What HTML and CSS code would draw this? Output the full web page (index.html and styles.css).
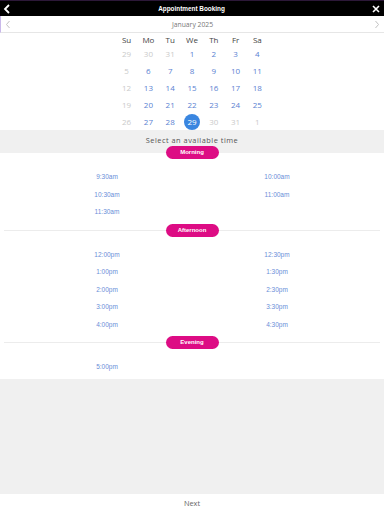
FILE: index.html
```html
<!DOCTYPE html>
<html>
<head>
    <title>Appointment Booking</title>
    <link rel="stylesheet" href="styles.css">
</head>
<body>
<div class="app">
    <div class="topbar">
        <svg class="ico back" width="8" height="10" viewBox="0 0 8 10"><path d="M6 1 L2 5 L6 9" fill="none" stroke="#fff" stroke-width="1.8"/></svg>
        <span class="title">Appointment Booking</span>
        <svg class="ico close" width="8" height="8" viewBox="0 0 8 8"><path d="M1 1 L7 7 M7 1 L1 7" fill="none" stroke="#fff" stroke-width="1.6"/></svg>
    </div>

    <div class="monthbar">
        <svg width="6" height="9" viewBox="0 0 6 9"><path d="M4.5 1 L1.5 4.5 L4.5 8" fill="none" stroke="#bbb" stroke-width="0.9"/></svg>
        <span class="month">January 2025</span>
        <svg width="6" height="9" viewBox="0 0 6 9"><path d="M1.5 1 L4.5 4.5 L1.5 8" fill="none" stroke="#bbb" stroke-width="0.9"/></svg>
    </div>

    <div class="cal">
        <div class="wd">Su</div><div class="wd">Mo</div><div class="wd">Tu</div><div class="wd">We</div><div class="wd">Th</div><div class="wd">Fr</div><div class="wd">Sa</div>
        <div class="d off">29</div><div class="d off">30</div><div class="d off">31</div><div class="d">1</div><div class="d">2</div><div class="d">3</div><div class="d">4</div>
        <div class="d off">5</div><div class="d">6</div><div class="d">7</div><div class="d">8</div><div class="d">9</div><div class="d">10</div><div class="d">11</div>
        <div class="d off">12</div><div class="d">13</div><div class="d">14</div><div class="d">15</div><div class="d">16</div><div class="d">17</div><div class="d">18</div>
        <div class="d off">19</div><div class="d">20</div><div class="d">21</div><div class="d">22</div><div class="d">23</div><div class="d">24</div><div class="d">25</div>
        <div class="d off">26</div><div class="d">27</div><div class="d">28</div><div class="d"><span class="sel">29</span></div><div class="d off">30</div><div class="d off">31</div><div class="d off">1</div>
    </div>

    <div class="pick">Select an available time</div>

    <div class="period first">
        <div class="head"><span class="pill">Morning</span></div>
        <div class="slots">
            <span>9:30am</span><span>10:00am</span>
            <span>10:30am</span><span>11:00am</span>
            <span>11:30am</span><span></span>
        </div>
    </div>

    <div class="period">
        <div class="head line"><span class="pill">Afternoon</span></div>
        <div class="slots">
            <span>12:00pm</span><span>12:30pm</span>
            <span>1:00pm</span><span>1:30pm</span>
            <span>2:00pm</span><span>2:30pm</span>
            <span>3:00pm</span><span>3:30pm</span>
            <span>4:00pm</span><span>4:30pm</span>
        </div>
    </div>

    <div class="period last">
        <div class="head line"><span class="pill">Evening</span></div>
        <div class="slots">
            <span>5:00pm</span><span></span>
        </div>
    </div>

    <div class="filler"></div>

    <div class="footer">Next</div>
</div>
</body>
</html>
```

FILE: styles.css
```css
* { box-sizing: border-box; }
body { margin: 0; font-family: "Open Sans", sans-serif; background: #fff; }
.app { display: flex; flex-direction: column; height: 512px; width: 384px; }

.topbar { height: 16px; background: #000; border-top: 1px solid #2c1838; display: flex; align-items: center; justify-content: space-between; padding: 0 4px 0 3px; }
.title { color: #fff; font-family: "Liberation Sans", Arial, sans-serif; font-weight: bold; font-size: 6.4px; }

.monthbar { height: 17px; display: flex; align-items: center; justify-content: space-between; padding: 0 4px; border-bottom: 1px solid #e6e6e6; border-left: 1px solid #c9b9ea; }
.month { font-size: 6.8px; color: #777; }

.cal { display: grid; grid-template-columns: repeat(7, 21.8px); grid-template-rows: 11px; grid-auto-rows: 17px; justify-content: center; padding-top: 1px; }
.wd { font-size: 8px; color: #444; text-align: center; height: 11px; line-height: 11px; }
.d { font-size: 8px; color: #5a82d2; display: flex; align-items: center; justify-content: center; }
.d.off { color: #cacaca; }
.sel { width: 16px; height: 16px; border-radius: 50%; background: #3a86e0; color: #fff; display: flex; align-items: center; justify-content: center; }

.pick { background: #f0f0f0; height: 23px; padding-top: 5px; text-align: center; font-size: 7.4px; letter-spacing: 0.5px; color: #555; }

.period { padding: 0 0 9px; }
.head { height: 0; display: flex; justify-content: center; margin: 0 4px; }
.head.line { border-top: 1px solid #ececec; }
.pill { background: #dd0c84; color: #fff; font-family: "Liberation Sans", Arial, sans-serif; font-weight: bold; font-size: 6px; width: 53px; height: 13px; line-height: 13px; border-radius: 7px; text-align: center; margin-top: -7px; flex-shrink: 0; }
.slots { display: grid; grid-template-columns: 1fr 1fr; grid-auto-rows: 17.5px; padding: 15px 22px 0; }
.slots span { font-family: "Liberation Sans", Arial, sans-serif; font-size: 6.5px; color: #6a8ed8; text-align: center; line-height: 17.5px; }
.period.last { padding-bottom: 3px; }

.filler { flex: 1; background: #f0f0f0; }
.footer { height: 18px; text-align: center; font-size: 7.4px; color: #666; line-height: 18px; }
```
